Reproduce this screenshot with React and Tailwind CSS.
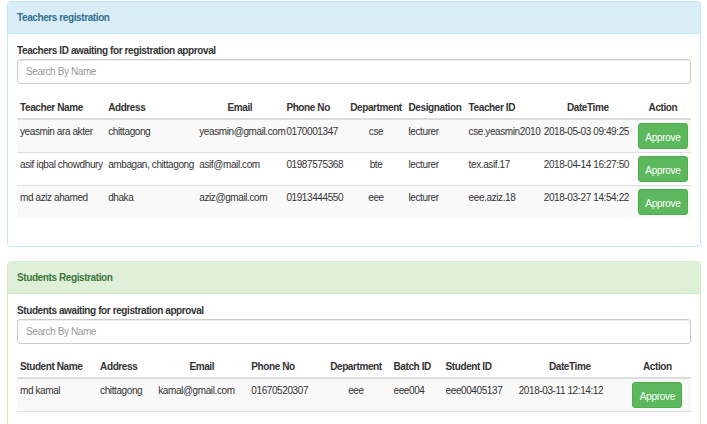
const teachers = [
  {
    name: "yeasmin ara akter",
    address: "chittagong",
    email: "yeasmin@gmail.com",
    phone: "0170001347",
    dept: "cse",
    designation: "lecturer",
    id: "cse.yeasmin2010",
    date: "2018-05-03 09:49:25",
  },
  {
    name: "asif iqbal chowdhury",
    address: "ambagan, chittagong",
    email: "asif@mail.com",
    phone: "01987575368",
    dept: "bte",
    designation: "lecturer",
    id: "tex.asif.17",
    date: "2018-04-14 16:27:50",
  },
  {
    name: "md aziz ahamed",
    address: "dhaka",
    email: "aziz@gmail.com",
    phone: "01913444550",
    dept: "eee",
    designation: "lecturer",
    id: "eee.aziz.18",
    date: "2018-03-27 14:54:22",
  },
];

const students = [
  {
    name: "md kamal",
    address: "chittagong",
    email: "kamal@gmail.com",
    phone: "01670520307",
    dept: "eee",
    batch: "eee004",
    id: "eee00405137",
    date: "2018-03-11 12:14:12",
  },
];

function ApproveButton() {
  return (
    <button className="w-[50px] h-[26px] rounded-[3px] bg-[#5cb85c] border border-[#4cae4c] text-white text-[10px] tracking-[-0.3px] leading-[13px] pt-[2px]">
      Approve
    </button>
  );
}

function Panel({ title, tone, children, className = "" }) {
  const styles = tone === "info" ? "border-[#bce8f1]" : "border-[#d6e9c6]";
  const head =
    tone === "info"
      ? "bg-[#d9edf7] text-[#31708f] border-[#bce8f1]"
      : "bg-[#dff0d8] text-[#3c763d] border-[#d6e9c6]";
  return (
    <div className={`border rounded-[4px] bg-white ${styles} ${className}`}>
      <div className={`h-[32px] flex items-center pl-[9px] border-b rounded-t-[3px] font-bold ${head}`}>
        {title}
      </div>
      <div className="px-[9px] pt-[10px] pb-[10px]">{children}</div>
    </div>
  );
}

function SearchBox() {
  return (
    <input
      type="text"
      placeholder="Search By Name"
      className="mt-[2px] w-full h-[25px] px-[8px] border border-[#ccc] rounded-[3px] shadow-[inset_0_1px_1px_rgba(0,0,0,0.075)] placeholder:text-[#999] text-[10px] outline-none"
    />
  );
}

const th = "font-bold px-[3px] pt-[7px] pb-[4px] border-b-2 border-[#ddd] whitespace-nowrap";
const thL = `${th} text-left`;
const thC = `${th} text-center`;
const td = "px-[3px] pt-[5px] pb-[3px] align-top border-t border-[#ddd] whitespace-nowrap";

export default function App() {
  return (
    <div className="font-['Liberation_Sans',Arial,sans-serif] text-[10px] tracking-[-0.4px] leading-[13px] text-[#333] pl-[7px] pr-[6px] pt-[1px] bg-white min-h-screen">
      {/* Teachers */}
      <Panel title="Teachers registration" tone="info" className="mb-[14px]">
        <p className="font-bold">Teachers ID awaiting for registration approval</p>
        <SearchBox />
        <table className="table-fixed w-full border-collapse mt-[10px] mb-[18px]">
          <colgroup>
            <col className="w-[88px]" />
            <col className="w-[91px]" />
            <col className="w-[87px]" />
            <col className="w-[63px]" />
            <col className="w-[59px]" />
            <col className="w-[60px]" />
            <col className="w-[75px]" />
            <col className="w-[94px]" />
            <col className="w-[56px]" />
          </colgroup>
          <thead>
            <tr>
              <th className={thL}>Teacher Name</th>
              <th className={thL}>Address</th>
              <th className={thC}>Email</th>
              <th className={thL}>Phone No</th>
              <th className={thC}>Department</th>
              <th className={thL}>Designation</th>
              <th className={thL}>Teacher ID</th>
              <th className={thC}>DateTime</th>
              <th className={thC}>Action</th>
            </tr>
          </thead>
          <tbody>
            {teachers.map((t, i) => (
              <tr key={t.id} className={i % 2 === 0 ? "bg-[#f9f9f9]" : ""}>
                <td className={td}>{t.name}</td>
                <td className={td}>{t.address}</td>
                <td className={td}>{t.email}</td>
                <td className={td}>{t.phone}</td>
                <td className={`${td} text-center`}>{t.dept}</td>
                <td className={td}>{t.designation}</td>
                <td className={td}>{t.id}</td>
                <td className={td}>{t.date}</td>
                <td className={`${td} !pt-[3px] text-center`}>
                  <ApproveButton />
                </td>
              </tr>
            ))}
          </tbody>
        </table>
      </Panel>

      {/* Students */}
      <Panel title="Students Registration" tone="success">
        <p className="font-bold">Students awaiting for registration approval</p>
        <SearchBox />
        <table className="table-fixed w-full border-collapse mt-[9px] mb-[18px] border-b border-[#ddd]">
          <colgroup>
            <col className="w-[80px]" />
            <col className="w-[58px]" />
            <col className="w-[93px]" />
            <col className="w-[73px]" />
            <col className="w-[69px]" />
            <col className="w-[52px]" />
            <col className="w-[73px]" />
            <col className="w-[108px]" />
            <col className="w-[67px]" />
          </colgroup>
          <thead>
            <tr>
              <th className={thL}>Student Name</th>
              <th className={thL}>Address</th>
              <th className={thC}>Email</th>
              <th className={thL}>Phone No</th>
              <th className={thC}>Department</th>
              <th className={thL}>Batch ID</th>
              <th className={thL}>Student ID</th>
              <th className={thC}>DateTime</th>
              <th className={thC}>Action</th>
            </tr>
          </thead>
          <tbody>
            {students.map((s, i) => (
              <tr key={s.id} className={i % 2 === 0 ? "bg-[#f9f9f9]" : ""}>
                <td className={td}>{s.name}</td>
                <td className={td}>{s.address}</td>
                <td className={td}>{s.email}</td>
                <td className={td}>{s.phone}</td>
                <td className={`${td} text-center`}>{s.dept}</td>
                <td className={td}>{s.batch}</td>
                <td className={td}>{s.id}</td>
                <td className={td}>{s.date}</td>
                <td className={`${td} !pt-[3px] text-center`}>
                  <ApproveButton />
                </td>
              </tr>
            ))}
          </tbody>
        </table>
      </Panel>
    </div>
  );
}
